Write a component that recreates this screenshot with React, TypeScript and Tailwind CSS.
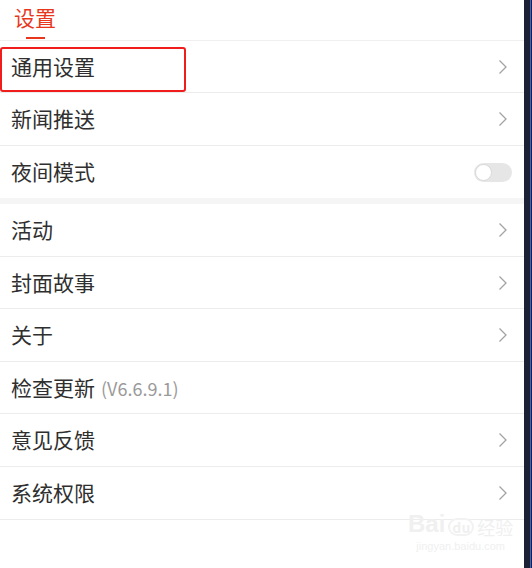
import React from 'react';

type Row = {
  label: string;
  h: string;
  border: boolean;
  kind: 'arrow' | 'toggle' | 'version';
  boxed?: boolean;
};

const groupOne: Row[] = [
  { label: '通用设置', h: 'h-[52px]', border: true, kind: 'arrow', boxed: true },
  { label: '新闻推送', h: 'h-[53px]', border: true, kind: 'arrow' },
  { label: '夜间模式', h: 'h-[52px]', border: false, kind: 'toggle' },
];

const groupTwo: Row[] = [
  { label: '活动', h: 'h-[53px]', border: true, kind: 'arrow' },
  { label: '封面故事', h: 'h-[52px]', border: true, kind: 'arrow' },
  { label: '关于', h: 'h-[53px]', border: true, kind: 'arrow' },
  { label: '检查更新', h: 'h-[52px]', border: true, kind: 'version' },
  { label: '意见反馈', h: 'h-[53px]', border: true, kind: 'arrow' },
  { label: '系统权限', h: 'h-[53px]', border: true, kind: 'arrow' },
];

const Chevron = () => (
  <svg width="10" height="16" viewBox="0 0 10 16" className="mr-[16px]">
    <polyline points="1.5,1.5 8,8 1.5,14.5" fill="none" stroke="#a3a3a3" strokeWidth="1.3" />
  </svg>
);

const Toggle = () => (
  <div className="mr-[12px] flex h-[19px] w-[38px] items-center rounded-full bg-[#e6e6e6] px-[1px]">
    <div className="h-[17px] w-[17px] rounded-full border border-[#d8d8d8] bg-white" />
  </div>
);

const SettingRow = ({ row }: { row: Row }) => (
  <div
    className={`relative flex items-center justify-between ${row.h} ${row.border ? 'border-b border-[#ececec]' : ''}`}
  >
    <div className="flex items-baseline pl-[11px]">
      <span className="text-[21px] text-[#2f2f2f]">{row.label}</span>
      {row.kind === 'version' && (
        <span className="ml-[6px] text-[18px] text-[#9a9a9a]">(V6.6.9.1)</span>
      )}
    </div>
    {row.kind === 'arrow' && <Chevron />}
    {row.kind === 'toggle' && <Toggle />}
    {row.boxed && (
      <div className="absolute left-0 top-[6px] h-[45px] w-[186px] rounded-[3px] border-2 border-[#f01d1d]" />
    )}
  </div>
);

export default function App() {
  return (
    <div
      className="flex h-[568px] w-[532px] bg-white"
      style={{ fontFamily: '"Noto Sans CJK SC", "Noto Sans", sans-serif' }}
    >
      <div className="relative flex-1">
        <header className="h-[41px] border-b border-[#efefef]">
          <div className="relative ml-[14px] inline-block">
            <span className="block pt-[3px] text-[21px] leading-[28px] text-[#e8371d]">设置</span>
            <div className="absolute left-[12px] top-[37px] h-[2px] w-[19px] bg-[#e8371d]" />
          </div>
        </header>
        {groupOne.map((row) => (
          <SettingRow key={row.label} row={row} />
        ))}
        <div className="h-[6px] bg-[#f5f5f5]" />
        {groupTwo.map((row) => (
          <SettingRow key={row.label} row={row} />
        ))}
        <div className="absolute left-[408px] top-[512px] flex flex-col items-center text-[#f0f0f0]">
          <div className="flex items-end gap-[3px] leading-none">
            <span className="text-[24px] font-bold" style={{ fontFamily: '"Liberation Sans", sans-serif' }}>
              Bai
            </span>
            <span className="rounded-full border-2 border-[#f2f2f2] px-[2px] text-[14px] font-bold">du</span>
            <span className="text-[18px]">经验</span>
          </div>
          <span className="mt-[5px] text-[11px] leading-none" style={{ fontFamily: '"Liberation Sans", sans-serif' }}>
            jingyan.baidu.com
          </span>
        </div>
      </div>
      <div className="flex w-[8px] bg-[#1c2134]">
        <div className="ml-[6px] w-[1px] bg-[#3d63d6]" />
      </div>
    </div>
  );
}
